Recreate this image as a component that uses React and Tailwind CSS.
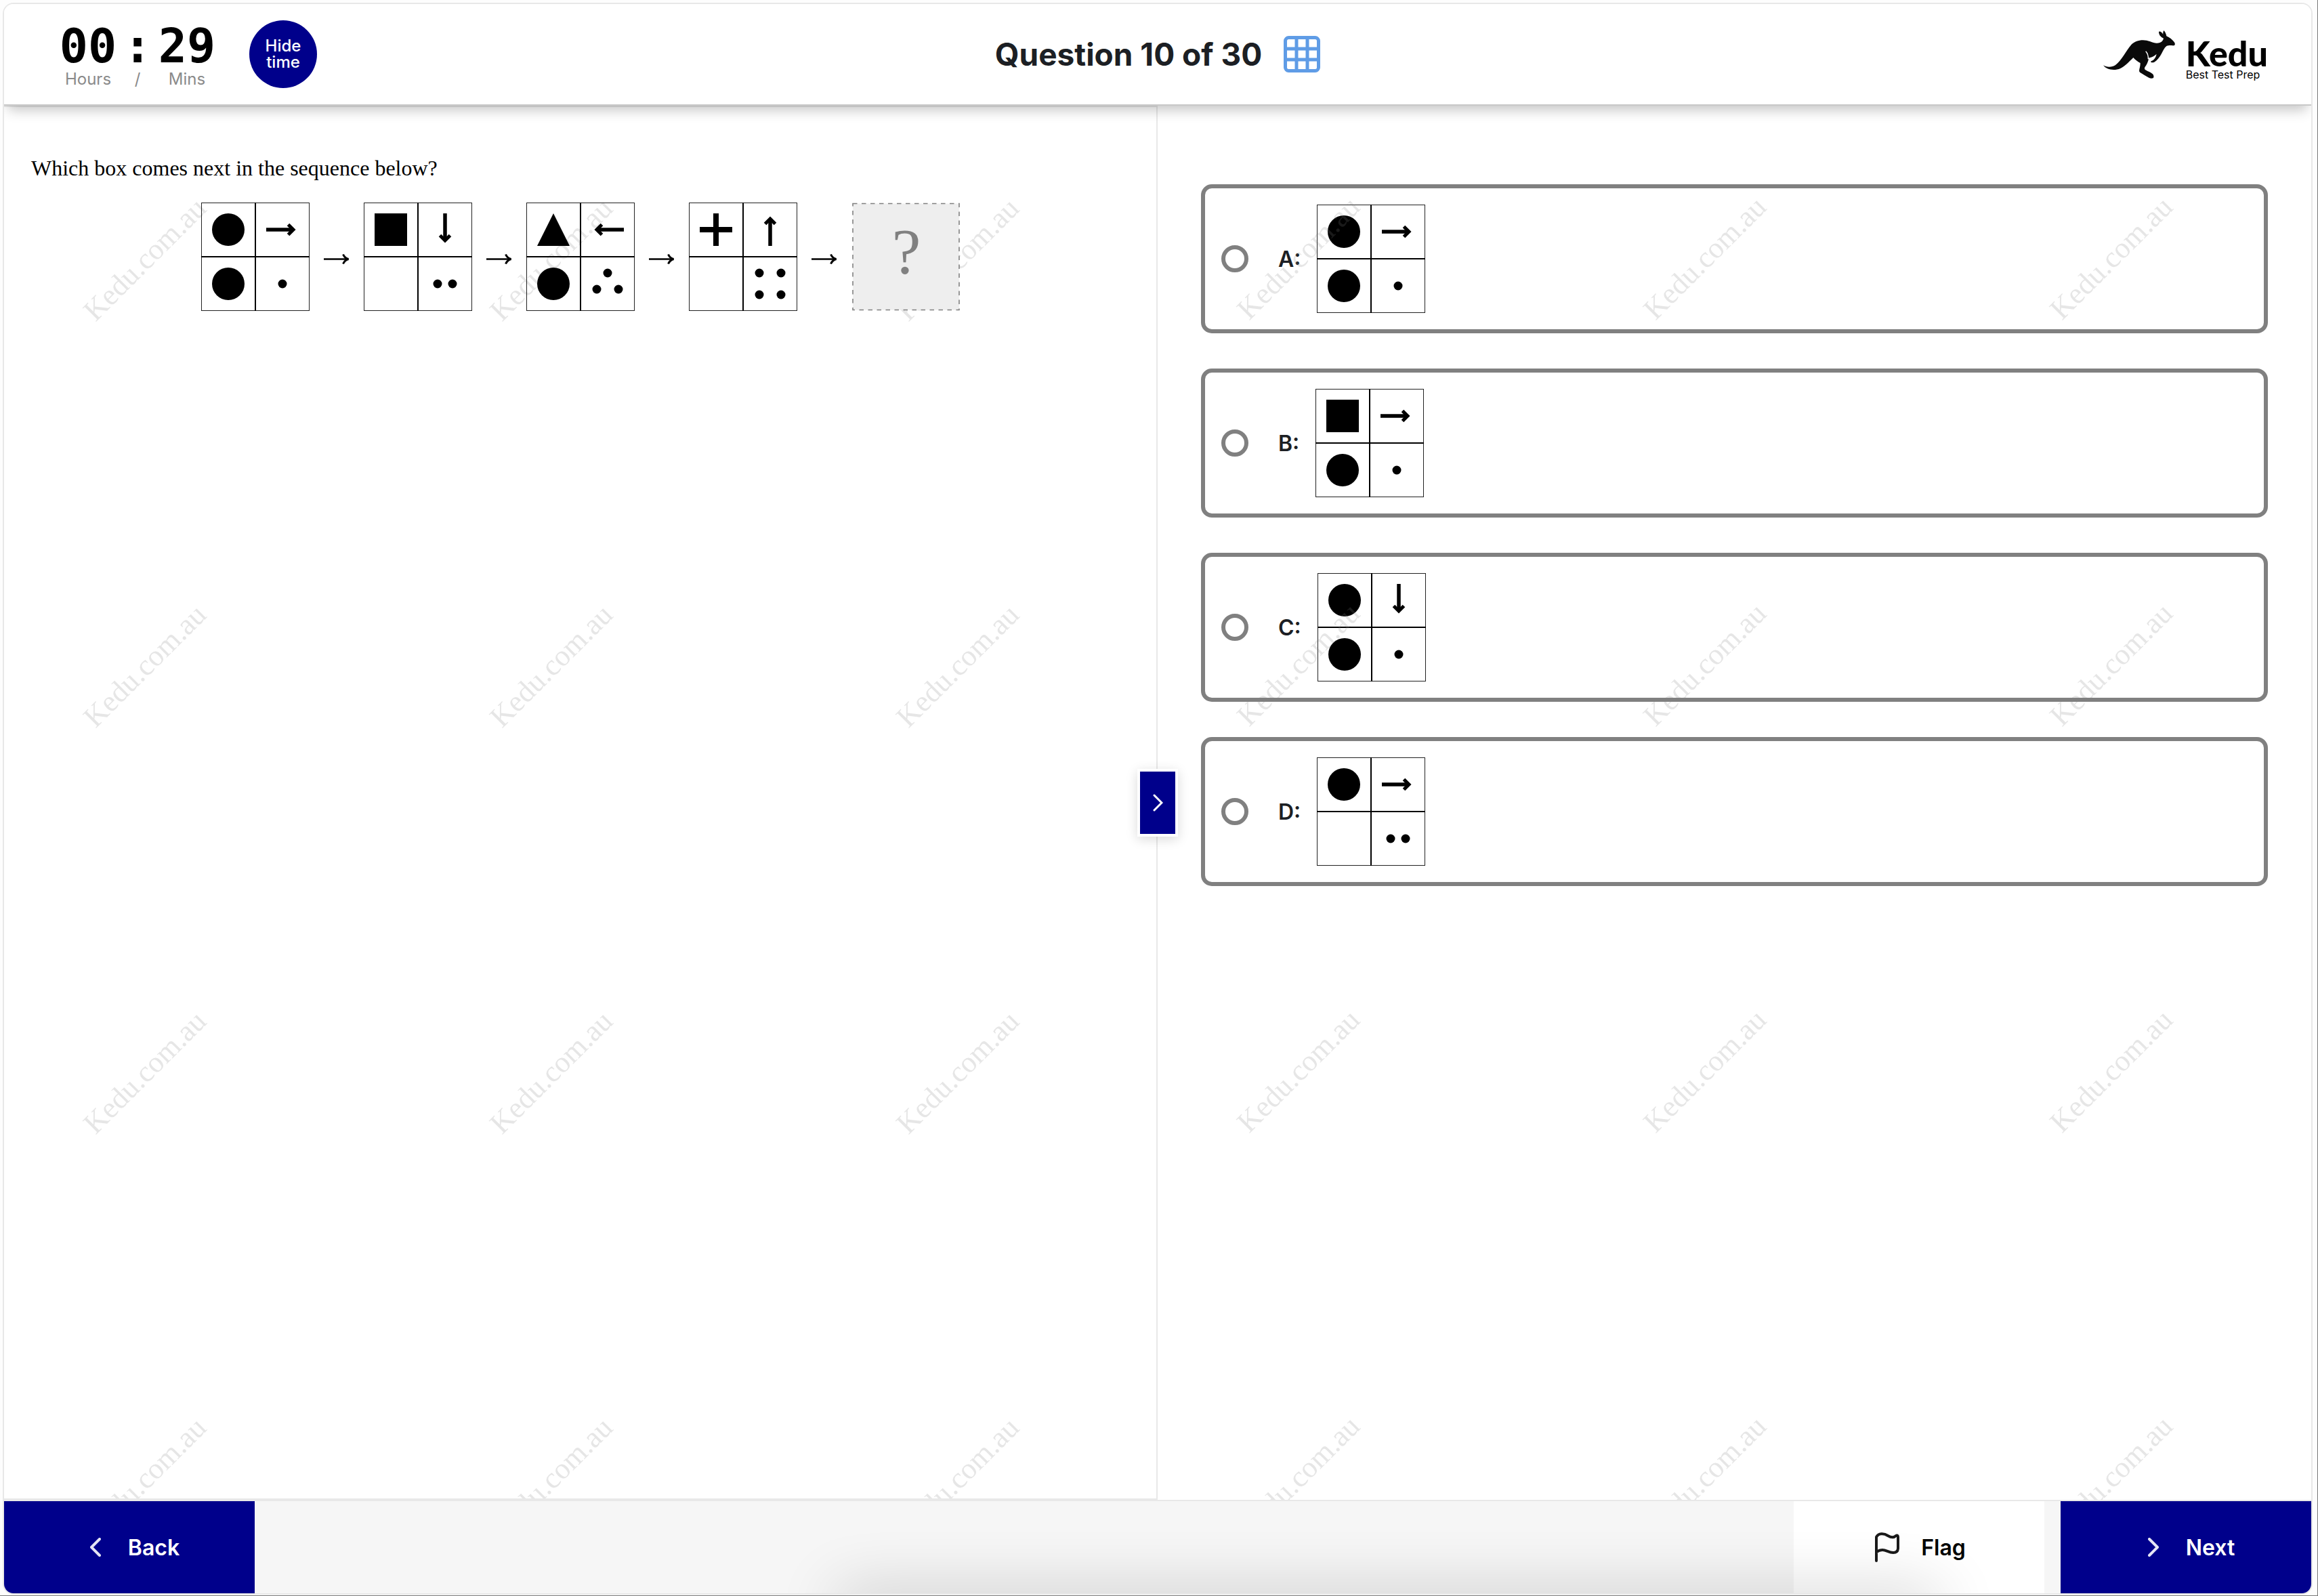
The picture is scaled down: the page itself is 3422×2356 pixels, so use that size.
const SEQUENCE = [
    { id: 1, topLeft: 'circle', arrow: 'right', bottomLeft: 'circle', dots: 1 },
    { id: 2, topLeft: 'square', arrow: 'down', bottomLeft: null, dots: 2 },
    { id: 3, topLeft: 'triangle', arrow: 'left', bottomLeft: 'circle', dots: 3 },
    { id: 4, topLeft: 'plus', arrow: 'up', bottomLeft: null, dots: 4 },
];

const OPTIONS = [
    { letter: 'A', topLeft: 'circle', arrow: 'right', bottomLeft: 'circle', dots: 1 },
    { letter: 'B', topLeft: 'square', arrow: 'right', bottomLeft: 'circle', dots: 1 },
    { letter: 'C', topLeft: 'circle', arrow: 'down', bottomLeft: 'circle', dots: 1 },
    { letter: 'D', topLeft: 'circle', arrow: 'right', bottomLeft: null, dots: 2 },
];

const ROTATION = { right: 0, down: 90, left: 180, up: 270 };

const DOTS = {
    1: [[0, 0]],
    2: [[-11, 0], [11, 0]],
    3: [[0, -16], [-16, 8], [16, 8]],
    4: [[-16, -16], [16, -16], [-16, 16], [16, 16]],
};

function Shape({ kind, x, y }) {
    return (
        <g transform={`translate(${x} ${y})`}>
            {kind === 'circle' && <circle r="24" />}
            {kind === 'square' && <rect x="-24" y="-24" width="48" height="48" />}
            {kind === 'triangle' && <path d="M0 -24 L24 24 H-24 Z" />}
            {kind === 'plus' && <path d="M-24 0 H24 M0 -24 V24" stroke="black" strokeWidth="8" />}
        </g>
    );
}

function Box({ topLeft, arrow, bottomLeft, dots }) {
    return (
        <svg viewBox="0 0 160 160" className="size-40 shrink-0" aria-hidden="true">
            <rect x="0.5" y="0.5" width="159" height="159" fill="none" stroke="#222" />
            <path d="M80 0 V160 M0 80 H160" stroke="black" strokeWidth="2" />
            <Shape kind={topLeft} x={40} y={40} />
            <g transform={`translate(120 40) rotate(${ROTATION[arrow]})`} fill="none" stroke="black">
                <path d="M-24 0 H15" strokeWidth="5.5" />
                <path d="M8.5 -7.5 L16 0 L8.5 7.5" strokeWidth="5" />
            </g>
            <Shape kind={bottomLeft} x={40} y={120} />
            {DOTS[dots].map(([x, y]) => (
                <circle key={`${x},${y}`} cx={120 + x} cy={120 + y} r="6.5" />
            ))}
        </svg>
    );
}

function SequenceArrow() {
    return (
        <svg viewBox="0 0 80 160" className="h-40 w-20 shrink-0" fill="none" stroke="black" aria-hidden="true">
            <path d="M21 83.5 H57" strokeWidth="2.5" />
            <path d="M49.5 76.5 C51 80 53.5 82.5 57.5 83.5 C53.5 84.5 51 87 49.5 90.5" strokeWidth="3" />
        </svg>
    );
}

function MissingBox() {
    return (
        <svg viewBox="0 0 160 160" className="size-40 shrink-0" role="img" aria-label="Missing box">
            <rect x="2" y="1.5" width="157" height="157" fill="#eeeeee" stroke="#808080" strokeWidth="1.6" strokeDasharray="6.5 6.5" />
            <text x="81" y="105" textAnchor="middle" fill="#808080" className="font-['Liberation_Serif',serif] text-[96px]">?</text>
        </svg>
    );
}

function Watermark() {
    return (
        <div className="pointer-events-none absolute inset-0 overflow-hidden" aria-hidden="true">
            <svg className="size-full">
                <defs>
                    <pattern id="watermark" width="600" height="600" patternUnits="userSpaceOnUse">
                        <text
                            transform="translate(135 318) rotate(-45)"
                            fill="#808080"
                            fillOpacity="0.2"
                            className="font-['Liberation_Serif',serif] text-[44px]"
                        >
                            Kedu.com.au
                        </text>
                    </pattern>
                </defs>
                <rect width="100%" height="100%" fill="url(#watermark)" />
            </svg>
        </div>
    );
}

function Kangaroo() {
    return (
        <svg viewBox="138 129 318 213" className="h-[71px] w-[106px]" aria-hidden="true">
            <path
                fill="#0a0a0a"
                d="M138 283 C152 292 176 293 192 282 C218 264 238 220 262 192 C280 173 315 165 346 178 C362 185 376 188 388 183 C398 179 403 172 405 164 C392 158 384 148 384 135 C390 131 398 138 403 146 C402 139 403 133 406 129 C412 134 416 143 418 154 C432 160 444 170 452 180 C456 185 457 191 453 195 C444 197 430 193 418 198 C408 206 402 220 396 232 C388 248 376 262 364 269 C358 271 352 272 349 269 C348 266 350 264 354 263 C364 258 371 248 374 233 C366 242 352 248 340 250 C337 268 330 282 322 292 C320 298 321 302 325 304 C338 311 350 316 357 322 C362 328 363 335 359 340 C352 342 346 341 340 338 C326 331 312 322 301 315 C296 311 297 306 298 300 C301 290 302 282 302 273 C291 268 280 259 271 249 C254 266 236 286 214 297 C186 309 152 303 138 283 Z"
            />
            <path d="M326 221 C334 229 338 240 337 256" fill="none" stroke="white" strokeWidth="4" />
        </svg>
    );
}

function GridIcon() {
    return (
        <svg viewBox="0 0 54 54" className="size-[54px]" fill="none" stroke="#5f9ce6" strokeWidth="5" aria-hidden="true">
            <rect x="2.5" y="2.5" width="49" height="49" rx="5" />
            <path d="M19 2 V52 M35 2 V52 M2 19 H52 M2 35 H52" />
        </svg>
    );
}

function Chevron({ d }) {
    return (
        <svg
            viewBox="0 0 16 28"
            className="ml-4 h-7 w-4"
            fill="none"
            stroke="#e4e4f4"
            strokeWidth="4"
            strokeLinecap="round"
            strokeLinejoin="round"
            aria-hidden="true"
        >
            <path d={d} />
        </svg>
    );
}

function FlagIcon() {
    return (
        <svg
            viewBox="0 0 36 44"
            className="h-11 w-9"
            fill="none"
            stroke="#1a1a1a"
            strokeWidth="4"
            strokeLinecap="round"
            strokeLinejoin="round"
            aria-hidden="true"
        >
            <path d="M2 42 V7 C5 1 13 1 19 5 C24 8 28 8 31 5 C33 4 34 5 34 7 V23 C34 28 31 30 27 30 C20 30 17 26 11 26 C7 26 5 27 2 29" />
        </svg>
    );
}

function Header() {
    return (
        <header className="relative z-10 flex h-[150px] shrink-0 items-center border-b-2 border-[#c8c8c8] bg-white px-16 shadow-[0_12px_18px_-6px_rgba(0,0,0,0.24)]">
            <div className="flex flex-1 items-center gap-[50px]">
                <div className="ml-[18px] grid grid-cols-[84px_62px_84px] justify-items-center pt-1 text-center">
                    <span className="font-['DejaVu_Sans_Mono',monospace] text-[70px] leading-[70px] font-bold">00</span>
                    <span className="font-['DejaVu_Sans_Mono',monospace] text-[70px] leading-[70px] font-bold">:</span>
                    <span className="font-['DejaVu_Sans_Mono',monospace] text-[70px] leading-[70px] font-bold">29</span>
                    <span className="text-2xl leading-7 text-[#8a8a8a]">Hours</span>
                    <span className="text-2xl leading-7 text-[#8a8a8a]">/</span>
                    <span className="text-2xl leading-7 text-[#8a8a8a]">Mins</span>
                </div>
                <button type="button" className="size-[100px] rounded-full bg-[#00008b] text-2xl leading-6 font-medium text-white">
                    Hide
                    <br />
                    time
                </button>
            </div>
            <div className="flex items-center gap-8">
                <h1 className="text-[46px] leading-[56px] font-bold text-[#1c1f24]">Question 10 of 30</h1>
                <button type="button" aria-label="All questions">
                    <GridIcon />
                </button>
            </div>
            <div className="flex flex-1 items-center justify-end gap-4">
                <Kangaroo />
                <div className="pt-3 text-black">
                    <p className="font-['Lato',sans-serif] text-[52px] leading-[48px] font-black">Kedu</p>
                    <p className="text-base leading-4">Best Test Prep</p>
                </div>
            </div>
        </header>
    );
}

function Question() {
    return (
        <section className="relative border-y-2 border-r-2 border-[#e8e8e8]">
            <Watermark />
            <div className="relative px-10 pt-[66px]">
                <p className="font-['Liberation_Serif',serif] text-[32px] leading-[48px] text-black">
                    Which box comes next in the sequence below?
                </p>
                <div className="mt-[27px] flex justify-center">
                    {SEQUENCE.map((box) => (
                        <div key={box.id} className="flex">
                            <Box {...box} />
                            <SequenceArrow />
                        </div>
                    ))}
                    <MissingBox />
                </div>
            </div>
        </section>
    );
}

function Answers() {
    return (
        <section className="relative">
            <div className="flex flex-col gap-[52px] px-16 pt-[116px]">
                {OPTIONS.map((option) => (
                    <label
                        key={option.letter}
                        className="flex items-center gap-11 rounded-2xl border-6 border-[#808080] bg-white p-6"
                    >
                        <input
                            type="radio"
                            name="answer"
                            value={option.letter}
                            className="size-10 shrink-0 appearance-none rounded-full border-6 border-[#808080] bg-white checked:bg-[#00008b]"
                        />
                        <span className="flex items-center gap-6 text-[32px] font-semibold text-[#1c1f24]">
                            <span className="pt-0.5">{option.letter}:</span>
                            <Box {...option} />
                        </span>
                    </label>
                ))}
            </div>
            <Watermark />
        </section>
    );
}

function Footer() {
    return (
        <footer className="relative flex h-[138px] shrink-0 overflow-hidden border-t-2 border-[#e8e8e8] bg-[#f6f6f6] text-[32px] font-semibold">
            <button type="button" className="flex w-[370px] items-center justify-center gap-10 bg-[#00008b] text-white">
                <Chevron d="M14 2 L2 14 L14 26" />
                <span className="pt-0.5">Back</span>
            </button>
            <button type="button" className="mr-6 ml-auto flex w-[370px] items-center justify-center gap-8 bg-white pl-1 text-black">
                <FlagIcon />
                <span className="pt-0.5">Flag</span>
            </button>
            <button type="button" className="flex w-[370px] items-center justify-center gap-10 bg-[#00008b] text-white">
                <Chevron d="M2 2 L14 14 L2 26" />
                <span className="pt-0.5">Next</span>
            </button>
            {/* soft shade rising from below the bar */}
            <div className="pointer-events-none absolute top-full right-[16%] left-[36%] h-10 rounded-3xl shadow-[0_0_90px_rgba(0,0,0,0.24)]" />
        </footer>
    );
}

export default function App() {
    return (
        <div className="h-screen border-r border-b border-[#777777] bg-[#fdfdfd] pt-1 pr-[7px] pb-px pl-1 font-['Inter',sans-serif]">
            <div className="flex h-full flex-col overflow-hidden rounded-2xl border-2 border-[#e8e8e8] bg-white">
                <Header />
                <main className="relative grid flex-1 grid-cols-2">
                    <Question />
                    <Answers />
                    <button
                        type="button"
                        aria-label="Expand question"
                        className="absolute top-1/2 left-1/2 flex h-[100px] w-[60px] -translate-x-1/2 -translate-y-1/2 items-center justify-center border-4 border-white bg-[#00008b] shadow-[0_4px_16px_rgba(0,0,0,0.15)]"
                    >
                        <svg viewBox="0 0 16 26" className="h-[26px] w-4" fill="none" stroke="white" strokeWidth="3" strokeLinecap="round" aria-hidden="true">
                            <path d="M3 2 L14 13 L3 24" />
                        </svg>
                    </button>
                </main>
                <Footer />
            </div>
        </div>
    );
}
